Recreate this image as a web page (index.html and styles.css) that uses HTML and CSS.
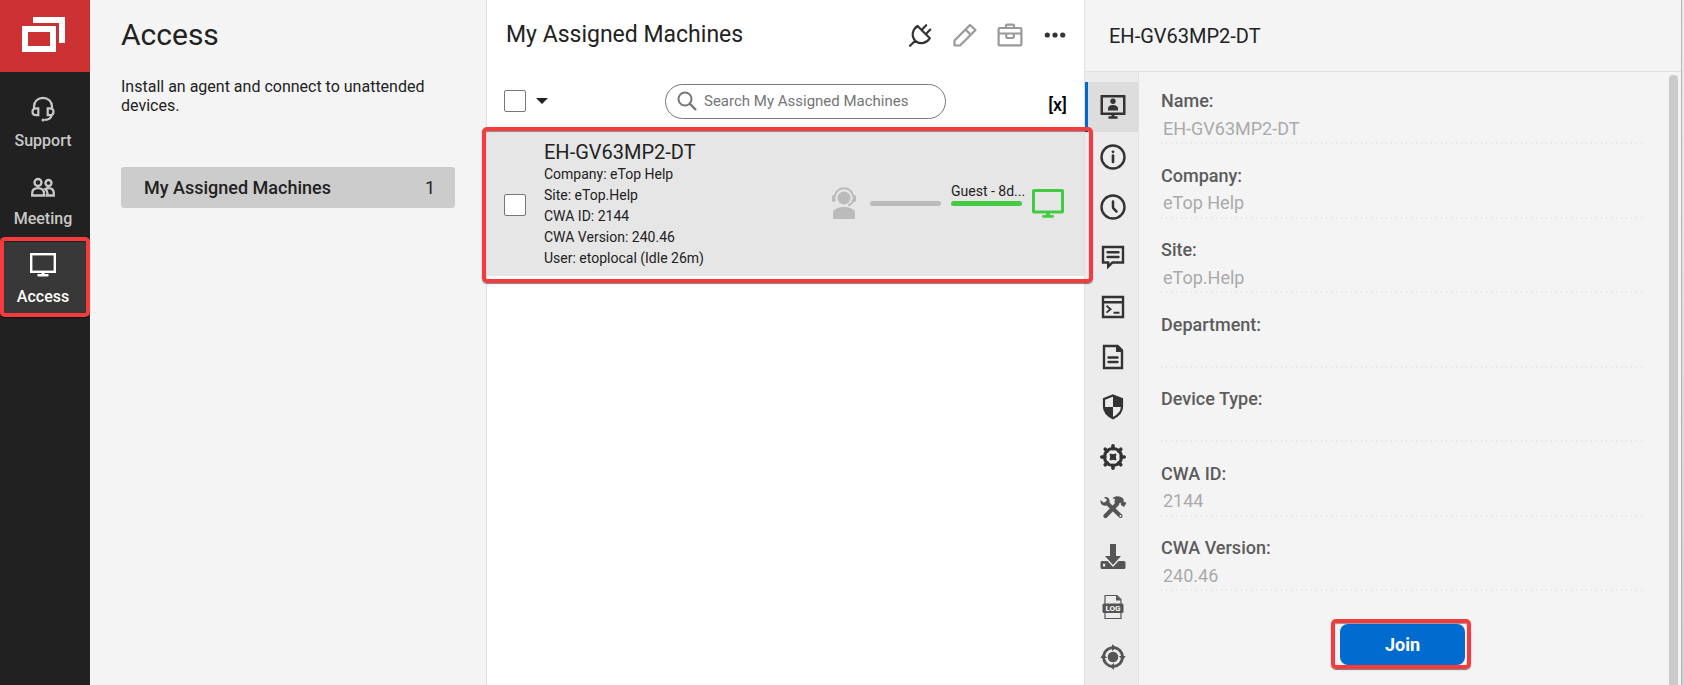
FILE: index.html
```html
<!DOCTYPE html>
<html lang="en">
<head>
<meta charset="utf-8">
<title>Access - My Assigned Machines</title>
<link rel="stylesheet" href="styles.css">
</head>
<body>
<div class="app">
  <nav class="sidebar" aria-label="Main">
    <a class="logo" href="#" aria-label="Home">
      <svg width="43" height="36" viewBox="0 0 43 36" fill="#fff"><path d="M11 0h32v26h-6V6H11z"/><path fill-rule="evenodd" d="M0 9h34v26H0zM6 15v14h22V15z"/></svg>
    </a>
    <div class="nav-list">
      <a class="nav-item" href="#">
        <svg width="24" height="26" viewBox="0 0 24 26" fill="none" stroke="currentColor" stroke-width="2.2" stroke-linecap="round"><path d="M3 12V10.500C3 5.500 7 1.800 12 1.800s9 3.700 9 8.700V12"/><path d="M7.300 12.300v6.900H5.200C2.900 19.200 1.500 17.800 1.500 15.700s1.400-3.400 3.700-3.400zM16.700 12.300v6.900h2.100c2.300 0 3.700-1.400 3.700-3.500s-1.400-3.400-3.700-3.400zM20.600 19.500c-.8 3-3.500 4.300-6.500 4.300"/><circle cx="12" cy="24" r="1.500" fill="currentColor" stroke="none"/></svg>
        <span>Support</span>
      </a>
      <a class="nav-item" href="#">
        <svg width="24" height="26" viewBox="0 0 24 26" fill="none" stroke="currentColor" stroke-width="2.300"><circle cx="7" cy="8.500" r="3.500"/><path d="M1.200 21.500v-2.200c0-3.200 2.300-5.200 5.800-5.200s6 2 6 5.200v2.200z"/><circle cx="17.500" cy="9" r="3"/><path d="M14.500 21.500H22.800v-2.300c0-3.200-2.100-5.100-5.300-5.100-1.200 0-2.300.3-3.200.8 1.400 1.200 2.200 2.600 2.200 4.400v2.200"/></svg>
        <span>Meeting</span>
      </a>
      <a class="nav-item active marked" href="#" aria-current="page">
        <svg width="26" height="26" viewBox="0 0 26 26"><rect x="1.200" y="2.200" width="23.600" height="17.600" fill="none" stroke="currentColor" stroke-width="2.400"/><path d="M11.500 20.500h3v1.500h3a1.200 1.200 0 0 1 0 2.400h-9a1.200 1.200 0 0 1 0-2.400h3z" fill="currentColor"/></svg>
        <span>Access</span>
      </a>
    </div>
  </nav>

  <aside class="groups">
    <h1>Access</h1>
    <p>Install an agent and connect to unattended devices.</p>
    <a class="group" href="#"><span>My Assigned Machines</span><span class="count">1</span></a>
  </aside>

  <main class="machines">
    <header class="machines-head">
      <h2>My Assigned Machines</h2>
      <div class="actions">
        <button type="button" class="icon-btn" aria-label="Join"><svg width="26" height="26" viewBox="0 0 26 26" fill="none" stroke="#333" stroke-width="2.200" stroke-linecap="round" stroke-linejoin="round"><path d="M3 23.800l5-4.800M10.500 4L22.800 16.200C20.500 20.500 13 23.500 8.300 18.700 3.800 14 5.500 7.500 10.500 4zM14.800 7.800l4.400-4.600M19 12l4.300-4.400"/></svg></button>
        <button type="button" class="icon-btn" aria-label="Edit"><svg width="26" height="26" viewBox="0 0 26 26" fill="none" stroke="#999" stroke-width="2.200" stroke-linejoin="round"><path d="M2.500 18.500L18 3l5.500 5L8 23.500H2.500zM13.500 7.500L19 13"/></svg></button>
        <button type="button" class="icon-btn" aria-label="Toolbox"><svg width="26" height="26" viewBox="0 0 26 26" fill="none" stroke="#999" stroke-width="2.200"><rect x="1.600" y="6" width="22.800" height="17.400" rx="1"/><path d="M9 6V3.600q0-1 1-1h6q1 0 1 1V6M1.600 11.500h7.600v3.500q0 1 1 1h5.600q1 0 1-1v-3.500h7.600M9 11.500h8"/></svg></button>
        <button type="button" class="icon-btn" aria-label="More"><svg width="26" height="26" viewBox="0 0 26 26" fill="#333"><circle cx="5.300" cy="13" r="2.600"/><circle cx="13" cy="13" r="2.600"/><circle cx="20.700" cy="13" r="2.600"/></svg></button>
      </div>
    </header>
    <div class="toolbar">
      <input class="check" type="checkbox" aria-label="Select all">
      <button type="button" class="caret" aria-label="Selection options"></button>
      <label class="search">
        <svg width="20" height="20" viewBox="0 0 20 20" fill="none" stroke="#777" stroke-width="2"><circle cx="8" cy="8" r="6.500"/><path d="M12.700 12.700L19 19" stroke-width="2.400"/></svg>
        <input type="text" placeholder="Search My Assigned Machines" aria-label="Search My Assigned Machines">
      </label>
      <button type="button" class="collapse">[x]</button>
    </div>
    <article class="machine marked">
      <input class="check" type="checkbox" aria-label="Select EH-GV63MP2-DT">
      <div class="info">
        <h3>EH-GV63MP2-DT</h3>
        <div>Company: eTop Help</div>
        <div>Site: eTop.Help</div>
        <div>CWA ID: 2144</div>
        <div>CWA Version: 240.46</div>
        <div>User: etoplocal (Idle 26m)</div>
      </div>
      <div class="status">
        <svg width="26" height="32" viewBox="0 0 26 32" fill="#bbb"><circle cx="13" cy="11" r="6.500"/><path d="M2 31v-5c0-3.500 5-6 11-6s11 2.500 11 6v5q0 1-1 1H3q-1 0-1-1z"/><path d="M4 9C5 4 8.500 1.300 13 1.300S21 4 22 9M22 13c-.5 3-2.300 4.700-5 5.300" fill="none" stroke="#bbb" stroke-width="2"/><rect x="1" y="8" width="3.500" height="7" rx="1.700"/><rect x="21.500" y="8" width="3.500" height="7" rx="1.700"/></svg>
        <div class="link"></div>
        <div class="link guest">Guest - 8d...</div>
        <svg width="32" height="30" viewBox="0 0 32 30"><rect x="1.500" y="2.500" width="29" height="21.500" rx=".5" fill="none" stroke="#43cb43" stroke-width="3"/><path d="M14 25h4v2h2.500a1.300 1.300 0 0 1 0 2.800h-9a1.300 1.300 0 0 1 0-2.800H14z" fill="#43cb43"/></svg>
      </div>
    </article>
  </main>

  <section class="detail">
    <header class="detail-head"><h2>EH-GV63MP2-DT</h2></header>
    <div class="detail-body">
      <div class="rail">
        <button type="button" class="tab selected" aria-label="Start"><svg width="26" height="26" viewBox="0 0 26 26" fill="#333"><path fill-rule="evenodd" d="M1 1h24q.5 0 .5.500v19q0 .5-.5.500H1q-.5 0-.5-.5v-19Q.500 1 1 1zm2 2.500v15h20v-15z"/><circle cx="13" cy="7.300" r="2.700"/><path d="M8 16.500v-2c0-2 2-3.500 5-3.500s5 1.500 5 3.500v2zM11.500 21h3v1.200h2a1.300 1.300 0 0 1 0 2.600h-7a1.300 1.300 0 0 1 0-2.600h2z"/></svg></button>
        <button type="button" class="tab" aria-label="General"><svg width="26" height="26" viewBox="0 0 26 26" fill="none" stroke="#333" stroke-width="2.400"><circle cx="13" cy="13" r="11.500"/><path d="M13 11.500V18" stroke-width="2.600" stroke-linecap="round"/><circle cx="13" cy="7.800" r="1.400" fill="#333" stroke="none"/></svg></button>
        <button type="button" class="tab" aria-label="Timeline"><svg width="26" height="26" viewBox="0 0 26 26" fill="none" stroke="#333" stroke-width="2.400"><circle cx="13" cy="13" r="11.500"/><path d="M13 7.500V13q0 1 .7 1.700l2.800 2.800" stroke-width="2.500" stroke-linecap="round"/></svg></button>
        <button type="button" class="tab" aria-label="Messages"><svg width="26" height="26" viewBox="0 0 26 26" fill="none" stroke="#333" stroke-width="2.400"><path d="M3 3h20v15.500H12.500L8.200 22.700V18.500H3z"/><path d="M7.500 8.300h11M7.500 13h11" stroke-linecap="round"/></svg></button>
        <button type="button" class="tab" aria-label="Commands"><svg width="26" height="26" viewBox="0 0 26 26" fill="none" stroke="#333" stroke-width="2.400"><path d="M3 3h20v20H3zM3 8.200h20"/><path d="M6.500 11.800l4 3.400-4 3.400M13.500 18.800h6" stroke-width="1.900"/></svg></button>
        <button type="button" class="tab" aria-label="Notes"><svg width="26" height="26" viewBox="0 0 26 26" fill="none" stroke="#333" stroke-width="2.400"><path d="M4 2h13.500L22 6.500V24H4z"/><path d="M16 1h2l5 5v2h-7z" fill="#333" stroke="none"/><path d="M8.500 13.500h9M8.500 18h9" stroke-linecap="round"/></svg></button>
        <button type="button" class="tab" aria-label="Security"><svg width="26" height="26" viewBox="0 0 26 26"><path d="M13 1.500l9 3.500v7.500c0 5.500-4.500 9.500-9 11.700-4.500-2.200-9-6.200-9-11.700V5z" fill="none" stroke="#333" stroke-width="2.200"/><path d="M13 1.500l9 3.500v8h-9zM13 13v11.200C8.500 22 4.500 18.500 4 13z" fill="#333"/></svg></button>
        <button type="button" class="tab" aria-label="Settings"><svg width="26" height="26" viewBox="0 0 26 26" fill="none" stroke="#333"><circle cx="13" cy="13" r="8.500" stroke-width="3.200"/><path d="M13 1.800v3M13 21.200v3M1.800 13h3M21.200 13h3M5.200 5.200l2 2M18.800 18.800l2 2M5.200 20.800l2-2M18.800 7.200l2-2" stroke-width="3.600" stroke-linecap="round"/><path d="M10 10l3 .7 3-.700-.700 3 .7 3-3-.700-3 .7.700-3z" fill="#333" stroke-width="1"/></svg></button>
        <button type="button" class="tab" aria-label="Tools"><svg width="28" height="26" viewBox="0 0 28 26" fill="none" stroke="#555"><path d="M8 9l13.500 13" stroke-width="4" stroke-linecap="round"/><path d="M5 3.200l2.800 2.500-.5 2.300-2.800.5-3-2.500c-.5 3.500 2 6.500 6 5.500l3-3c.8-3-1.300-6.500-5.500-5.300z" fill="#555" stroke="none"/><path d="M6.500 22L18 10" stroke-width="4.200" stroke-linecap="round"/><path d="M13.500 4c3.500-2.500 8-2.500 11 1l.2 2.800 2.800 1-2.500 4.200-3-2-.3-2.500-3.500 2.500-3-3 1-2.500z" fill="#555" stroke="none"/><circle cx="21.500" cy="22" r="1" fill="#ececec" stroke="none"/></svg></button>
        <button type="button" class="tab" aria-label="Install"><svg width="26" height="26" viewBox="0 0 26 26" fill="#555"><path d="M10 0h6v12h5l-8 9-8-9h5z"/><path fill-rule="evenodd" d="M2 17h5.500l5.500 6 5.500-6H24q1.500 0 1.500 1.500v5q0 1.500-1.500 1.500H2Q.500 25 .5 23.500v-5Q.500 17 2 17zm1 2.800v2.700h2.200v-2.700z"/></svg></button>
        <button type="button" class="tab" aria-label="Log"><svg width="26" height="26" viewBox="0 0 26 26"><path d="M5 10V1.500h12l4 4V10M5 18v6.500h16V18" fill="none" stroke="#555" stroke-width="1.200"/><path d="M16 1.500l5 5h-5z" fill="#555"/><rect x="2.500" y="9.500" width="21" height="9.500" rx="1.500" fill="#555"/><text class="log-text" x="13" y="17" text-anchor="middle">LOG</text></svg></button>
        <button type="button" class="tab" aria-label="Locate"><svg width="26" height="26" viewBox="0 0 26 26" fill="none" stroke="#555"><circle cx="13" cy="13" r="9.500" stroke-width="2.800" stroke-dasharray="12.900 2" stroke-dashoffset="-1"/><circle cx="13" cy="13" r="5.300" fill="#555" stroke="none"/><path d="M12 .300L16.500 3.500 12 7zM25.700 12L22.500 16.500 19 12zM14 25.700L9.500 22.500 14 19zM.300 14L3.500 9.500 7 14z" fill="#555" stroke="none"/></svg></button>
      </div>
      <div class="panel">
        <form class="fields">
          <div class="field"><label for="f1">Name:</label><input id="f1" type="text" value="EH-GV63MP2-DT"></div>
          <div class="field"><label for="f2">Company:</label><input id="f2" type="text" value="eTop Help"></div>
          <div class="field"><label for="f3">Site:</label><input id="f3" type="text" value="eTop.Help"></div>
          <div class="field"><label for="f4">Department:</label><input id="f4" type="text"></div>
          <div class="field"><label for="f5">Device Type:</label><input id="f5" type="text"></div>
          <div class="field"><label for="f6">CWA ID:</label><input id="f6" type="text" value="2144"></div>
          <div class="field"><label for="f7">CWA Version:</label><input id="f7" type="text" value="240.46"></div>
        </form>
        <div class="join-bar"><span class="join-wrap marked"><button type="button" class="join">Join</button></span></div>
      </div>
      <div class="scrollbar"></div>
    </div>
  </section>
  <div class="window-edge"></div>
</div>
</body>
</html>
```
FILE: styles.css
```css
* {
  box-sizing: border-box;
}

body {
  margin: 0;
  color: #222;
  background: #f4f4f4;
  font-family: Roboto, "Liberation Sans", sans-serif;
  font-size: 16px;
}

h1, h2, h3, p {
  margin: 0;
  font-weight: 400;
}

a {
  color: inherit;
  text-decoration: none;
}

button, input {
  font: inherit;
}

button {
  padding: 0;
  border: 0;
  background: none;
  cursor: pointer;
}

svg {
  display: block;
  flex: none;
}

.app {
  display: grid;
  grid-template-columns: 90px 397fr 597fr 597fr 3px;
  min-height: 100vh;
}

/* Red callout frames */
.marked {
  position: relative;
}

.marked::after {
  content: "";
  position: absolute;
  z-index: 2;
  inset: 0;
  border: 4px solid #f53b3b;
  border-radius: 5px;
  box-shadow: 0 1px 1px rgba(0, 0, 0, 0.5), inset 0 1px 1px rgba(0, 0, 0, 0.4);
  pointer-events: none;
}

/* Sidebar */
.sidebar {
  background: #212121;
}

.logo {
  display: flex;
  align-items: center;
  justify-content: center;
  height: 72px;
  padding: 0 3px 2px 0;
  background: #cb3032;
}

.nav-list {
  padding-top: 10px;
}

.nav-item {
  display: flex;
  flex-direction: column;
  align-items: center;
  gap: 7px;
  height: 78px;
  padding: 14px 4px 0 0;
  color: #c8c8c8;
  font-size: 16px;
  font-weight: 500;
  line-height: 24px;
}

.nav-item.active {
  background: #383838;
  color: #fff;
}

.nav-item.marked::after {
  inset: -1px 0;
}

/* Groups */
.groups {
  padding: 16px 31px 0;
  border-right: 1px solid #e0e0e0;
  background: #f4f4f4;
}

.groups h1 {
  font-size: 30px;
  line-height: 38px;
}

.groups p {
  margin-top: 23px;
  font-size: 16px;
  line-height: 19px;
}

.group {
  display: flex;
  align-items: center;
  justify-content: space-between;
  height: 41px;
  margin-top: 52px;
  padding: 0 20px 0 23px;
  border-radius: 3px;
  background: #ccc;
  font-size: 18px;
  font-weight: 500;
}

.count {
  font-weight: 400;
}

/* Machine list */
.machines {
  background: #fff;
}

.machines-head {
  display: flex;
  align-items: center;
  justify-content: space-between;
  height: 69px;
  padding: 0 16px 0 19px;
}

.machines-head h2 {
  font-size: 23px;
  line-height: 30px;
}

.actions {
  display: flex;
  gap: 19px;
}

.toolbar {
  display: grid;
  grid-template-columns: 22px 12px minmax(0, 97px) minmax(160px, 281px) 1fr;
  align-items: center;
  column-gap: 10px;
  height: 60px;
  padding: 4px 17px 0;
}

.check {
  appearance: none;
  width: 22px;
  height: 22px;
  margin: 0;
  border: 1px solid #777;
  border-radius: 2px;
  background: #fff;
}

.caret {
  width: 12px;
  height: 6px;
  background: #222;
  clip-path: polygon(0 0, 100% 0, 50% 100%);
}

.search {
  display: flex;
  grid-column: 4;
  align-items: center;
  gap: 7px;
  height: 35px;
  padding: 0 11px;
  border: 1px solid #777;
  border-radius: 18px;
}

.search input {
  flex: 1;
  min-width: 0;
  padding: 0;
  border: 0;
  outline: 0;
  background: none;
  font-size: 15px;
}

.search input::placeholder {
  color: #757575;
  opacity: 1;
}

.collapse {
  justify-self: end;
  padding-top: 6px;
  color: #000;
  font-size: 18px;
  font-weight: 500;
}

.machine {
  display: flex;
  align-items: center;
  padding: 11px 20px 7px 17px;
  background: #e6e6e6;
}

.machine.marked::after {
  inset: -2px -9px -7px -5px;
}

.info {
  flex: 1;
  min-width: 0;
  padding-left: 18px;
  font-size: 14px;
  line-height: 21px;
}

.info h3 {
  font-size: 20px;
  line-height: 24px;
}

.status {
  display: flex;
  align-items: center;
  gap: 10px;
  padding-bottom: 4px;
}

.link {
  position: relative;
  width: 71px;
  height: 44px;
  margin-left: 3px;
  font-size: 14px;
  line-height: 21px;
  white-space: nowrap;
}

.link::after {
  content: "";
  position: absolute;
  inset: 20px 0 auto;
  height: 5px;
  border-radius: 3px;
  background: #bbb;
}

.link.guest {
  margin-left: 0;
}

.link.guest::after {
  background: #43cb43;
}

/* Detail */
.detail {
  display: flex;
  flex-direction: column;
  border-left: 1px solid #e0e0e0;
}

.detail-head {
  display: flex;
  align-items: center;
  height: 72px;
  padding-left: 24px;
  border-bottom: 1px solid #e0e0e0;
}

.detail-head h2 {
  font-size: 20px;
}

.detail-body {
  display: flex;
  flex: 1;
}

.rail {
  flex: none;
  width: 54px;
  padding-top: 10px;
  border-right: 1px solid #e0e0e0;
  background: #ececec;
}

.tab {
  display: flex;
  align-items: center;
  justify-content: center;
  width: 100%;
  height: 50px;
  padding-left: 3px;
}

.tab.selected {
  padding-left: 0;
  border-left: 3px solid #0068cf;
  background: #ddd;
}

.log-text {
  fill: #fff;
  font-size: 8px;
  font-weight: 700;
}

.panel {
  display: flex;
  flex: 1;
  flex-direction: column;
  min-width: 0;
  padding: 18px 27px 0 22px;
}

.fields {
  display: grid;
  flex: 1;
  grid-auto-rows: minmax(74px, 1fr);
}

.field label {
  display: block;
  color: #5c5c5c;
  font-size: 18px;
  font-weight: 500;
  line-height: 22px;
}

.field input {
  display: block;
  width: 100%;
  height: 32px;
  padding: 0 2px;
  border: 0;
  outline: 0;
  background: repeating-linear-gradient(90deg, #e2e2e2 0 1px, transparent 1px 5px) 0 100% / 100% 2px no-repeat;
  color: #aaa;
  font-size: 18px;
}

.join-bar {
  display: flex;
  justify-content: center;
  height: 73px;
  padding: 12px 0 20px 2px;
}

.join-wrap {
  display: block;
}

.join-wrap.marked::after {
  inset: -5px -6px -4px -9px;
}

.join {
  width: 125px;
  height: 41px;
  border-radius: 8px;
  background: #026bd0;
  color: #fff;
  font-size: 18px;
  font-weight: 700;
}

.scrollbar {
  flex: none;
  width: 9px;
  margin: 3px 3px 0 0;
  border-radius: 4px 4px 0 0;
  background: #cacaca;
}

.window-edge {
  border-left: 1px solid #b4b4b4;
  background: linear-gradient(#ececec, #d0d0d0);
}
```
